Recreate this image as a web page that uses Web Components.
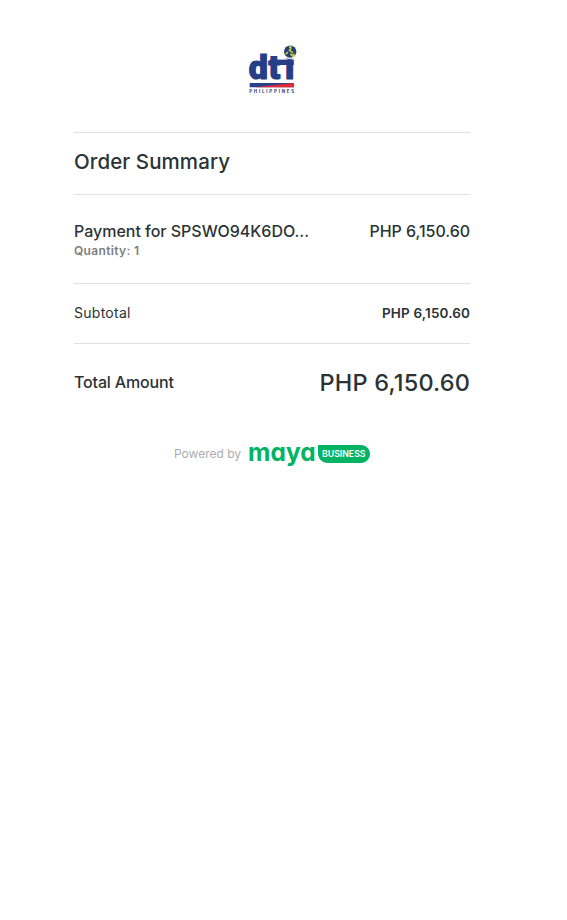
<!DOCTYPE html>
<html lang="en">
<head>
<meta charset="utf-8">
<title>Order Summary</title>
<style>
html, body { margin: 0; background: #fff; }
</style>
</head>
<body>
<checkout-page></checkout-page>
<script>
const define = (name, html, ready) => customElements.define(name, class extends HTMLElement {
  constructor() {
    super();
    this.attachShadow({ mode: 'open' }).innerHTML = html;
  }
  connectedCallback() { if (ready) ready(this); }
});

// One line of text, tracked so that it fills the measure given in "fit".
define('fit-text', `<style>
:host { display: block; white-space: nowrap; flex: none; }
span { display: inline-block; }
</style><span><slot></slot></span>`, el => {
  const span = el.shadowRoot.querySelector('span');
  const fit = parseFloat(el.getAttribute('fit'));
  const n = el.textContent.length;
  const gap = (fit - span.getBoundingClientRect().width) / (n - 1);
  span.style.letterSpacing = gap + 'px';
  span.style.marginRight = -gap + 'px';
});

define('dti-logo', `<style>
:host { display: block; width: 48px; height: 48px; }
svg { display: block; overflow: visible; }
</style>
<svg width="48" height="48" viewBox="0 0 48 48">
  <text x="-.2 19.6 36" y="34.1" font-family="Roboto, sans-serif" font-weight="900" font-size="34" fill="#243f86" stroke="#243f86" stroke-width="1.2">dti</text>
  <path d="M21 14.6H44.8V20H21Z" fill="#243f86"/>
  <circle cx="41.2" cy="6.8" r="7.2" fill="#fff"/>
  <circle cx="41.2" cy="6.6" r="6.2" fill="#24416f"/>
  <path d="M40 2.2l1.8-.4-.2 2.3-1.2 1.2 1.9 1.5M39 7.2l-2.4 2M42.6 6.6l1.2 1.3M41.4 8.7l1.1 1.5 2.3-.7.2 1.6-1.8.8" fill="none" stroke="#c9d245" stroke-width="1.5"/>
  <path d="M.7 38H45v4.2H.7Z" fill="#29408b"/>
  <path d="M45 38.1v4.1H6Z" fill="#e92835"/>
  <text x=".2" y="47.8" font-family="Inter, sans-serif" font-weight="700" font-size="4.4" fill="#2d3c70" textLength="45" lengthAdjust="spacing">PHILIPPINES</text>
</svg>`);

define('maya-logo', `<style>
:host { display: block; width: 120px; height: 22px; }
svg { display: block; overflow: visible; }
.word { font-family: Inter, sans-serif; font-weight: 700; font-size: 24.5px; font-feature-settings: "cv11", "ss03"; }
.tag { font: 600 9px Inter, sans-serif; }
</style>
<svg width="120" height="22" viewBox="0 0 120 22">
  <text class="word" x="-1.9" y="15.7" fill="#00b464" textLength="67.5" lengthAdjust="spacingAndGlyphs">maya</text>
  <path d="M68 0H112a9 9 0 0 1 0 17.9H78C72 17.9 68 14 68 8Z" fill="#05b364"/>
  <text class="tag" x="72" y="12.3" fill="#fff" textLength="43.5" lengthAdjust="spacingAndGlyphs">BUSINESS</text>
</svg>`);

define('summary-row', `<style>
:host { display: flex; justify-content: space-between; align-items: center; box-sizing: border-box; border-top: 1px solid #dfe2e4; }
</style><slot></slot><slot name="amount"></slot>`);

define('checkout-page', `<style>
:host { display: flex; flex-direction: column; box-sizing: border-box; width: 567px; height: 920px; padding: 45px 97px 0 74px; color: #2b3335; font-family: Inter, sans-serif; }
dti-logo { margin: 0 0 39px 175px; }
.title { height: 62px; font-size: 20.5px; line-height: 28px; font-weight: 500; padding-bottom: 4px; }
.item { height: 89px; align-items: flex-start; padding-top: 26px; font-size: 16px; line-height: 20px; }
.item fit-text { font-weight: 550; }
.item .qty { font-size: 12px; line-height: 20px; color: #7c8082; font-weight: 600; }
.sub { height: 60px; font-size: 14px; line-height: 20px; padding-bottom: 2px; }
.sub [slot] { font-weight: 600; font-size: 13.5px; }
.total { height: 78px; font-size: 16px; font-weight: 550; padding-bottom: 1px; }
.total [slot] { font-size: 23.5px; font-weight: 500; }
footer { display: flex; align-items: flex-start; height: 22px; gap: 9px; padding: 24px 0 0 100px; font-size: 12px; line-height: 17px; color: #aaadb0; }
</style>
<dti-logo></dti-logo>
<summary-row class="title"><fit-text fit="156">Order Summary</fit-text></summary-row>
<summary-row class="item">
  <div><fit-text fit="235">Payment for SPSWO94K6DO...</fit-text><fit-text class="qty" fit="65">Quantity: 1</fit-text></div>
  <fit-text slot="amount" fit="100.5">PHP 6,150.60</fit-text>
</summary-row>
<summary-row class="sub"><fit-text fit="56.5">Subtotal</fit-text><fit-text slot="amount" fit="88">PHP 6,150.60</fit-text></summary-row>
<summary-row class="total"><fit-text fit="100">Total Amount</fit-text><fit-text slot="amount" fit="150.5">PHP 6,150.60</fit-text></summary-row>
<footer><fit-text fit="67">Powered by</fit-text><maya-logo></maya-logo></footer>`);
</script>
</body>
</html>
